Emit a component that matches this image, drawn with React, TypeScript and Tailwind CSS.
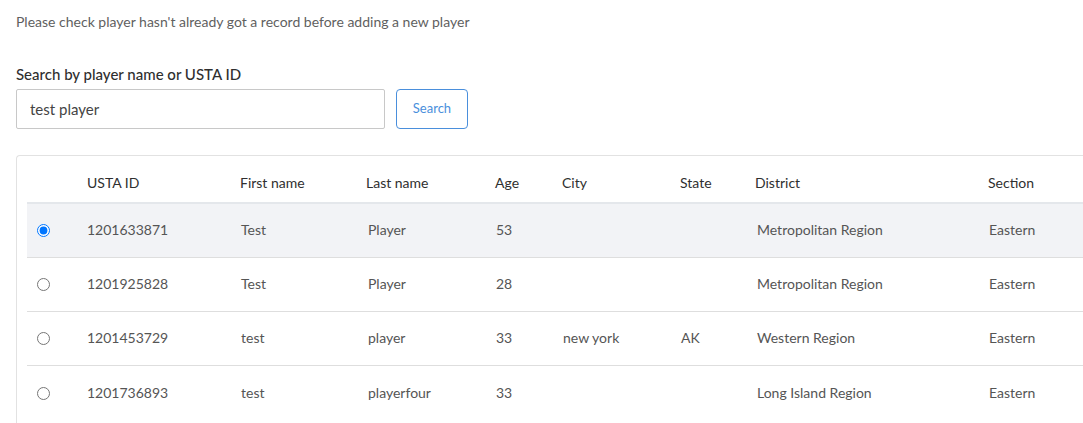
import { useState } from "react";

const players = [
  { id: "1201633871", first: "Test", last: "Player", age: "53", city: "", state: "", district: "Metropolitan Region", section: "Eastern" },
  { id: "1201925828", first: "Test", last: "Player", age: "28", city: "", state: "", district: "Metropolitan Region", section: "Eastern" },
  { id: "1201453729", first: "test", last: "player", age: "33", city: "new york", state: "AK", district: "Western Region", section: "Eastern" },
  { id: "1201736893", first: "test", last: "playerfour", age: "33", city: "", state: "", district: "Long Island Region", section: "Eastern" },
];

const cols = "grid grid-cols-[60px_153px_126px_129px_67px_118px_75px_233px_120px]";

export default function App() {
  const [selected, setSelected] = useState("1201633871");

  return (
    <div className="w-[1083px] h-[423px] overflow-hidden bg-white px-4 pt-[12px] font-['Lato',sans-serif]">
      <p className="text-[14px] leading-[20px] text-[#5f5f5f]">
        Please check player hasn't already got a record before adding a new player
      </p>

      <label className="mt-[32px] block text-[15px] leading-[20px] font-medium text-[#2f2f2f]">
        Search by player name or USTA ID
      </label>
      <div className="mt-[5px] flex gap-[11px]">
        <input
          defaultValue="test player"
          className="h-[40px] w-[369px] rounded-[2px] border border-[#c8c8c8] px-[13px] text-[15px] text-[#444] outline-none"
        />
        <button className="h-[40px] w-[72px] rounded-[4px] border border-[#4a8fdc] text-[13px] text-[#4a8fdc]">
          Search
        </button>
      </div>

      <div className="mt-[26px] w-[1120px] rounded-tl-[4px] border-l border-t border-[#e2e2e2] pl-[10px] pt-[10px] pb-4 text-[14px]">
        <div className={`${cols} h-[38px] items-center border-b-2 border-[#e4e7eb] pb-[3px] text-[#2f2f2f]`}>
          <div />
          <div>USTA ID</div>
          <div>First name</div>
          <div>Last name</div>
          <div>Age</div>
          <div>City</div>
          <div>State</div>
          <div>District</div>
          <div>Section</div>
        </div>
        {players.map((p, i) => (
          <label
            key={p.id}
            className={`${cols} h-[54px] items-center pb-[2px] text-[14px] text-[#555] ${
              i < players.length - 1 ? "border-b border-[#dedede]" : ""
            } ${selected === p.id ? "bg-[#f2f3f6]" : "bg-white"}`}
          >
            <div className="pl-[10px] pt-[2px] flex items-center">
              <input
                type="radio"
                name="player"
                checked={selected === p.id}
                onChange={() => setSelected(p.id)}
                className="m-0 h-[13px] w-[13px]"
              />
            </div>
            <div>{p.id}</div>
            <div className="pl-px">{p.first}</div>
            <div className="pl-[2px]">{p.last}</div>
            <div className="pl-px">{p.age}</div>
            <div className="pl-px">{p.city}</div>
            <div className="pl-px">{p.state}</div>
            <div className="pl-[2px]">{p.district}</div>
            <div className="pl-px">{p.section}</div>
          </label>
        ))}
      </div>
    </div>
  );
}
